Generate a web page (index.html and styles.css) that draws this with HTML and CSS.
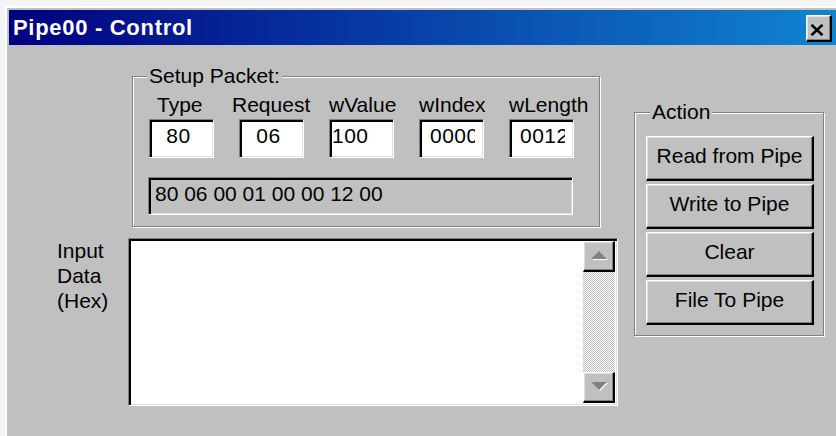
FILE: index.html
```html
<!DOCTYPE html>
<html lang="en">
<head>
<meta charset="utf-8">
<title>Pipe00 - Control</title>
<link rel="stylesheet" href="styles.css">
</head>
<body>
<div class="window">
  <div class="titlebar">
    <span class="title">Pipe00 - Control</span>
    <button class="close" type="button" aria-label="Close">
      <svg width="14" height="12" viewBox="0 0 14 12"><path d="M1.5 0.8 L12.5 11.2 M12.5 0.8 L1.5 11.2" stroke="#000" stroke-width="2.6" fill="none"/></svg>
    </button>
  </div>
  <div class="client">
    <div class="main">
      <fieldset class="group setup">
        <legend>Setup Packet:</legend>
        <div class="setup-body">
          <div class="fields">
            <div class="field">
              <span class="field-label lbl-type">Type</span>
              <div class="edit"><span class="edit-text text-center pad-type">80</span></div>
            </div>
            <div class="field">
              <span class="field-label lbl-request">Request</span>
              <div class="edit"><span class="edit-text text-center pad-type">06</span></div>
            </div>
            <div class="field">
              <span class="field-label">wValue</span>
              <div class="edit"><span class="edit-text">100</span></div>
            </div>
            <div class="field">
              <span class="field-label">wIndex</span>
              <div class="edit"><span class="edit-text inset-text">0000</span></div>
            </div>
            <div class="field">
              <span class="field-label">wLength</span>
              <div class="edit"><span class="edit-text inset-text">0012</span></div>
            </div>
          </div>
          <div class="edit edit-ro"><span class="edit-text">80 06 00 01 00 00 12 00</span></div>
        </div>
      </fieldset>
      <div class="data-row">
        <div class="data-label">Input<br>Data<br>(Hex)</div>
        <div class="memo">
          <div class="memo-text"></div>
          <div class="vscroll">
            <div class="sb-btn">
              <svg width="18" height="10" viewBox="0 0 18 10"><polygon points="2,9 10,1 18,9" fill="#fff"/><polygon points="1,8 9,0 17,8" fill="#808080"/></svg>
            </div>
            <div class="sb-track"></div>
            <div class="sb-btn">
              <svg width="18" height="10" viewBox="0 0 18 10"><polygon points="2,1 18,1 10,9" fill="#fff"/><polygon points="1,0 17,0 9,8" fill="#808080"/></svg>
            </div>
          </div>
        </div>
      </div>
    </div>
    <fieldset class="group action">
      <legend>Action</legend>
      <div class="action-body">
        <button class="btn" type="button">Read from Pipe</button>
        <button class="btn" type="button">Write to Pipe</button>
        <button class="btn" type="button">Clear</button>
        <button class="btn" type="button">File To Pipe</button>
      </div>
    </fieldset>
  </div>
</div>
</body>
</html>
```

FILE: styles.css
```css
* { box-sizing: border-box; }

html, body {
  margin: 0;
  height: 436px;
  overflow: hidden;
}

body {
  background: #f4f4f4;
  font-family: "Liberation Sans", Arial, sans-serif;
  font-size: 21px;
  line-height: 24px;
  color: #000;
}

/* window frame */
.window {
  margin: 6px 0 0 5px;
  height: 430px;
  border-top: 2px solid #fff;
  border-left: 2px solid #fff;
  padding: 2px 0 0 2px;
  background: #c0c0c0;
  display: flex;
  flex-direction: column;
}

.titlebar {
  height: 35px;
  flex: none;
  display: flex;
  align-items: center;
  padding-left: 4px;
  background: linear-gradient(90deg, #000080 0%, #0a4fb0 60%, #1084d0 100%);
}

.title {
  color: #fff;
  font-weight: bold;
  font-size: 22px;
  letter-spacing: 0.7px;
  line-height: 24px;
}

.close {
  margin: 2px 4px 0 auto;
  width: 26px;
  height: 27px;
  padding: 3px 0 0 0;
  background: #c0c0c0;
  border-style: solid;
  border-width: 1px 2px 2px 1px;
  border-color: #fff #000 #000 #fff;
  box-shadow: inset -1px -1px 0 #808080, inset 1px 1px 0 #dfdfdf;
  display: flex;
  align-items: center;
  justify-content: center;
}
.close svg { display: block; margin-left: -3px; }

/* client area */
.client {
  flex: 1;
  display: flex;
  align-items: flex-start;
  padding-top: 19px;
}

.main {
  width: 609px;
  flex: none;
}

/* etched group boxes */
.group {
  margin: 0;
  padding: 0;
  min-width: 0;
  border: 1px solid #808080;
  box-shadow: inset 1px 1px 0 #fff, 1px 1px 0 #fff;
}

.group legend {
  padding: 0 2px;
  background: #c0c0c0;
  line-height: 24px;
}

.setup {
  margin-left: 123px;
  width: 468px;
}
.setup legend { margin-left: 14px; }

.setup-body {
  padding: 5px 0 11px 16px;
}

.fields {
  display: flex;
  gap: 25px;
}

.field {
  width: 65px;
  display: flex;
  flex-direction: column;
  gap: 2px;
}

.field-label {
  white-space: nowrap;
  line-height: 24px;
}
.lbl-type { margin-left: 8px; }
.lbl-request { margin-left: -7px; }

/* sunken edit boxes */
.edit {
  width: 65px;
  height: 39px;
  padding: 4px 2px 0 2px;
  background: #fff;
  border: 1px solid;
  border-color: #808080 #fff #fff #808080;
  box-shadow: inset 2px 2px 0 #000, inset -1px -1px 0 #dfdfdf;
  display: flex;
}

.edit-text {
  flex: 1;
  min-width: 0;
  overflow: hidden;
  white-space: nowrap;
  letter-spacing: 0.5px;
}
.text-center { text-align: center; }
.pad-type { padding-right: 6px; }
.inset-text { margin: 0 6px 0 8px; }

.edit-ro {
  width: 425px;
  height: 38px;
  margin: 19px 0 0 -1px;
  padding: 4px 4px 0 6px;
  background: #c0c0c0;
}
.edit-ro .edit-text { letter-spacing: 0; }

/* data entry row */
.data-row {
  display: flex;
  margin-top: 11px;
}

.data-label {
  margin-left: 48px;
  width: 71px;
  line-height: 25px;
}

.memo {
  width: 490px;
  height: 168px;
  padding: 2px;
  border: 1px solid;
  border-color: #808080 #fff #fff #808080;
  box-shadow: inset 2px 2px 0 #000, inset -1px -1px 0 #dfdfdf;
  background: #fff;
  display: flex;
}

.memo-text { flex: 1; }

.vscroll {
  width: 32px;
  display: flex;
  flex-direction: column;
}

.sb-btn {
  height: 31px;
  flex: none;
  background: #c0c0c0;
  border-style: solid;
  border-width: 1px 2px 2px 1px;
  border-color: #fff #000 #000 #fff;
  box-shadow: inset -1px -1px 0 #808080, inset 1px 1px 0 #dfdfdf;
  display: flex;
  align-items: center;
  justify-content: center;
}
.sb-btn svg { display: block; }

.sb-track {
  flex: 1;
  background: repeating-conic-gradient(#c0c0c0 0 25%, #fff 0 50%) 0 0 / 2px 2px;
}

/* action buttons */
.action {
  margin: 36px 0 0 16px;
  width: 190px;
}
.action legend { margin-left: 15px; }

.action-body {
  padding: 12px 9px 10px 11px;
  display: flex;
  flex-direction: column;
  gap: 3px;
}

.btn {
  height: 45px;
  padding: 0 0 4px 0;
  font: inherit;
  line-height: 24px;
  color: #000;
  background: #c0c0c0;
  border-style: solid;
  border-width: 1px 2px 2px 1px;
  border-color: #fff #000 #000 #fff;
  box-shadow: inset -1px -1px 0 #808080, inset 1px 1px 0 #dfdfdf;
}
```
